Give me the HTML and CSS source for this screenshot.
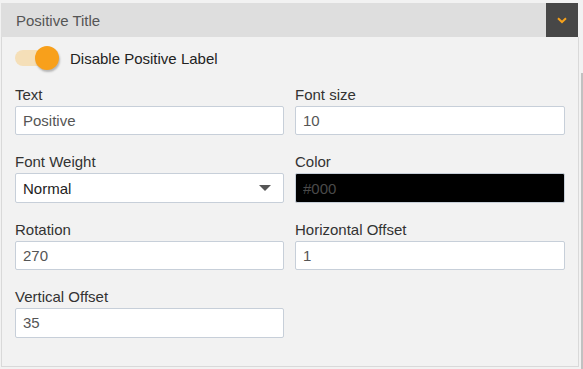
FILE: index.html
```html
<!DOCTYPE html>
<html>
<head>
<meta charset="utf-8">
<link rel="stylesheet" href="styles.css">
</head>
<body>
<div class="frame">
  <div class="panel">
    <div class="panel-header">
      <span class="panel-title">Positive Title</span>
      <button class="collapse-btn" type="button" aria-label="Collapse">
        <svg width="10" height="7" viewBox="0 0 10 7"><path d="M1 1.2 L5 5 L9 1.2" fill="none" stroke="#f7a21b" stroke-width="2"/></svg>
      </button>
    </div>
    <div class="panel-body">
      <div class="toggle-row">
        <span class="switch"><span class="switch-track"></span><span class="switch-knob"></span></span>
        <span class="toggle-label">Disable Positive Label</span>
      </div>
      <div class="form-grid">
        <div class="field">
          <label class="field-label">Text</label>
          <input class="field-input" type="text" value="Positive">
        </div>
        <div class="field">
          <label class="field-label">Font size</label>
          <input class="field-input" type="text" value="10">
        </div>
        <div class="field">
          <label class="field-label">Font Weight</label>
          <div class="field-select"><span>Normal</span><span class="caret"></span></div>
        </div>
        <div class="field">
          <label class="field-label">Color</label>
          <input class="field-input color-input" type="text" value="#000">
        </div>
        <div class="field">
          <label class="field-label">Rotation</label>
          <input class="field-input" type="text" value="270">
        </div>
        <div class="field">
          <label class="field-label">Horizontal Offset</label>
          <input class="field-input" type="text" value="1">
        </div>
        <div class="field">
          <label class="field-label">Vertical Offset</label>
          <input class="field-input" type="text" value="35">
        </div>
      </div>
    </div>
  </div>
  <div class="scroll-strip"><div class="scroll-thumb"></div></div>
</div>
</body>
</html>
```
FILE: styles.css
```css
html, body {
  margin: 0;
  padding: 0;
  background: #f2f2f2;
  font-family: "Liberation Sans", Arial, sans-serif;
  font-size: 15px;
  color: #333;
}
.frame {
  display: flex;
  align-items: flex-start;
  padding-top: 3px;
  padding-left: 1px;
  height: 366px;
}
.panel {
  width: 578px;
}
.panel-header {
  display: flex;
  align-items: center;
  justify-content: space-between;
  width: 577px;
  height: 34px;
  background: #dedede;
}
.panel-title {
  padding-left: 15px;
  color: #555;
  font-size: 15px;
}
.collapse-btn {
  width: 32px;
  height: 34px;
  margin: 0;
  padding: 0;
  border: none;
  background: #474747;
  display: flex;
  align-items: center;
  justify-content: center;
}
.panel-body {
  border: 1px solid #d9d9d9;
  border-top: none;
  box-sizing: border-box;
  height: 330px;
  padding: 9px 13px 0 13px;
}
.toggle-row {
  display: flex;
  align-items: center;
  height: 24px;
}
.switch {
  position: relative;
  width: 46px;
  height: 24px;
}
.switch-track {
  position: absolute;
  left: 0;
  top: 4px;
  width: 38px;
  height: 16px;
  border-radius: 8px;
  background: #f5dfb8;
}
.switch-knob {
  position: absolute;
  left: 20px;
  top: 0;
  width: 24px;
  height: 24px;
  border-radius: 50%;
  background: #f8a01b;
  box-shadow: 1px 2px 2px rgba(0, 0, 0, 0.25);
}
.toggle-label {
  margin-left: 9px;
  color: #222;
  font-size: 15px;
}
.form-grid {
  display: grid;
  grid-template-columns: 269px 270px;
  column-gap: 11px;
  margin-top: 14px;
}
.field {
  display: flex;
  flex-direction: column;
  margin-bottom: 16px;
}
.field-label {
  line-height: 21px;
  margin-bottom: 1px;
  color: #333;
  font-size: 15px;
}
.field-input, .field-select {
  box-sizing: border-box;
  height: 29.4px;
  width: 100%;
  border: 1px solid #c7cfd9;
  border-radius: 2px;
  background: #fff;
  padding: 0 7px;
  font-family: "Liberation Sans", Arial, sans-serif;
  font-size: 15px;
  color: #555;
  outline: none;
  margin: 0;
}
.field-select {
  display: flex;
  align-items: center;
  justify-content: space-between;
  padding-right: 12px;
  color: #222;
}
.caret {
  width: 0;
  height: 0;
  border-left: 6px solid transparent;
  border-right: 6px solid transparent;
  border-top: 6px solid #555;
}
.color-input {
  background: #000;
  color: #4a4a4a;
}
.scroll-strip {
  margin-left: 2px;
  padding-top: 70px;
  width: 2px;
  height: 296px;
}
.scroll-thumb {
  width: 2px;
  height: 100%;
  background: #c1c1c1;
}
```
